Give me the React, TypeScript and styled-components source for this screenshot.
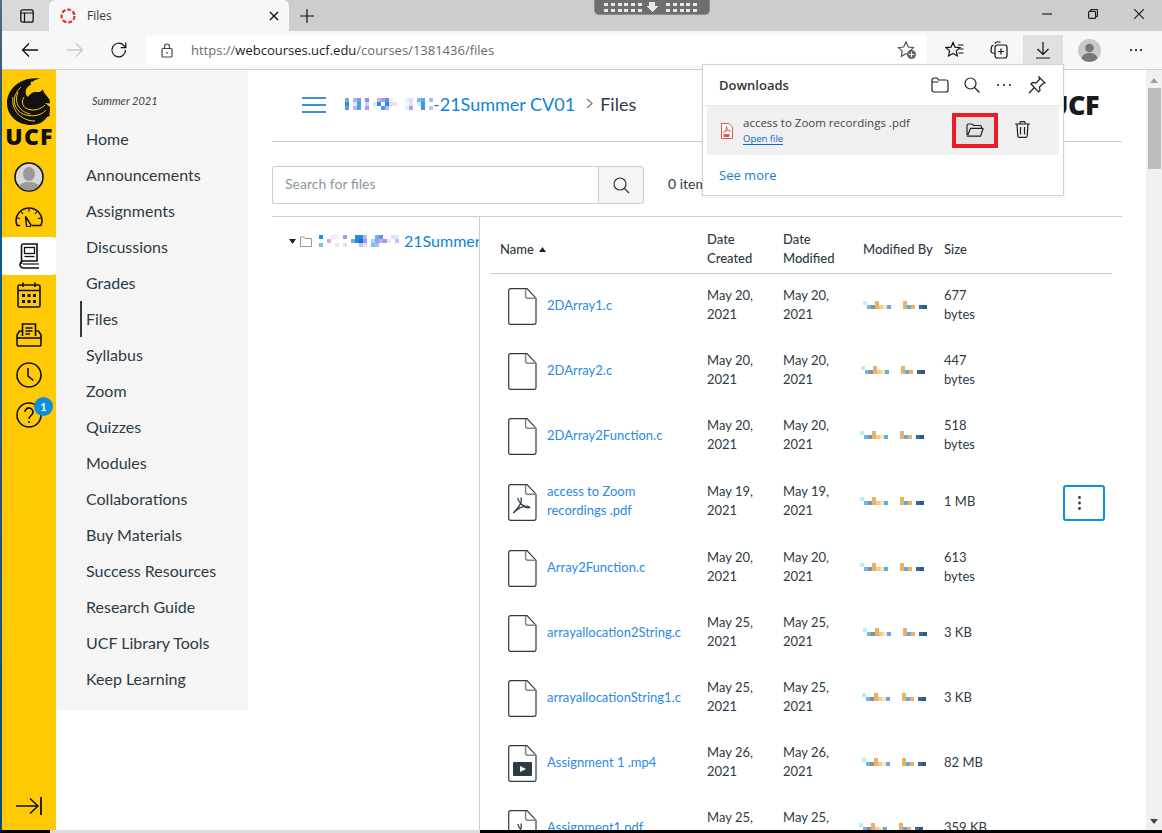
import React from "react";
import styled, { createGlobalStyle } from "styled-components";

const Global = createGlobalStyle`
  html, body { margin: 0; padding: 0; overflow: hidden; background: #fff; }
  * { box-sizing: border-box; }
  svg { display: block; flex: none; }
`;

const ui = `"Open Sans", "Noto Sans", "Liberation Sans", sans-serif`;
const lato = `Lato, "Open Sans", "Liberation Sans", sans-serif`;
const ink = "#2d3b45";
const blue = "#2b8ae2";

const Page = styled.div`
  position: relative;
  width: 1162px;
  height: 833px;
  overflow: hidden;
  display: flex;
  flex-direction: column;
  font-family: ${lato};
  color: ${ink};
`;
const Desk = styled.div`
  flex: 1;
  min-height: 0;
  display: flex;
`;
const DeskEdge = styled.div`
  width: 2px;
  background: linear-gradient(#5b6b78 0, #1c4f78 15%, #0a5a8c 35%, #2c4f7a 55%, #0a4a7c 100%);
`;
const BottomBand = styled.div`
  height: 3px;
  background: linear-gradient(90deg, #000 0 50px, #dcdcdc 50px 480px, #000 480px);
`;
const Win = styled.div`
  flex: 1;
  min-width: 0;
  display: flex;
  flex-direction: column;
`;
const TabStrip = styled.div`
  height: 31px;
  background: #cdcdcd;
  display: flex;
  align-items: stretch;
`;
const SideTabBtn = styled.div`
  width: 47px;
  background: #d9d9d9;
  display: flex;
  align-items: center;
  justify-content: center;
  padding-left: 2px;
  border-bottom-right-radius: 4px;
`;
const Tab = styled.div`
  width: 240px;
  background: #f7f7f7;
  border-radius: 6px 6px 0 0;
  display: flex;
  align-items: center;
  padding: 0 10px 0 11px;
  gap: 11px;
  font: 12px ${ui};
  color: #333;
`;
const TabTitle = styled.span`
  flex: 1;
`;
const NewTab = styled.div`
  width: 36px;
  display: flex;
  align-items: center;
  justify-content: center;
`;
const WinBtns = styled.div`
  margin-left: auto;
  display: flex;
  align-items: center;
  padding-bottom: 4px;
`;
const WinBtn = styled.div`
  width: 46px;
  display: flex;
  justify-content: center;
`;
const Toolbar = styled.div`
  height: 39px;
  background: #f7f7f7;
  border-bottom: 1px solid #cfcfcf;
  display: flex;
  align-items: flex-start;
  padding-top: 4px;
`;
const ToolBtn = styled.div<{ $w: number; $on?: boolean }>`
  width: ${(p) => p.$w}px;
  height: 30px;
  margin-left: ${(p) => (p.$on ? "2px" : "0")};
  display: flex;
  align-items: center;
  justify-content: center;
  background: ${(p) => (p.$on ? "#e0e0e0" : "transparent")};
`;
const AddressBar = styled.div`
  width: 781px;
  height: 30px;
  margin: 0 6px 0 1px;
  background: #fff;
  border-radius: 4px;
  display: flex;
  align-items: center;
  padding: 0 10px 0 15px;
  font: 13px ${ui};
  color: #6b6b6b;
`;
const Url = styled.span`
  flex: 1;
  margin-left: 18px;
`;
const UrlDomain = styled.span`
  color: #222;
`;
const Viewport = styled.div`
  flex: 1;
  min-height: 0;
  display: flex;
`;
const GlobalNav = styled.nav`
  width: 54px;
  background: #ffc904;
  display: flex;
  flex-direction: column;
  align-items: center;
  padding-top: 8px;
  padding-bottom: 15px;
`;
const LogoBox = styled.div`
  width: 54px;
  height: 79px;
  display: flex;
  flex-direction: column;
  align-items: center;
`;
const LogoText = styled.div`
  font: 800 23px/18px "Open Sans", "Liberation Sans", sans-serif;
  letter-spacing: 1.2px;
  color: #111;
  margin-top: 1px;
  padding-left: 1px;
`;
const GlobalItem = styled.div<{ $on?: boolean; $h: number }>`
  position: relative;
  width: 54px;
  height: ${(p) => p.$h}px;
  display: flex;
  align-items: center;
  justify-content: center;
  background: ${(p) => (p.$on ? "#fff" : "transparent")};
  border-radius: ${(p) => (p.$on ? "2px" : "0")};
`;
const Badge = styled.span`
  position: absolute;
  left: 32px;
  top: 2px;
  width: 19px;
  height: 19px;
  border-radius: 50%;
  background: #0e8fdc;
  color: #fff;
  font: 700 11px/19px ${lato};
  text-align: center;
`;
const NavSpacer = styled.div`
  flex: 1;
`;
const CourseNav = styled.nav`
  width: 192px;
  height: 640px;
  background: #f5f5f5;
  padding: 23px 0 0 24px;
`;
const Term = styled.div`
  font: italic 11px/16px ${lato};
  color: #444;
  margin: 0 0 12px 12px;
`;
const NavItem = styled.div<{ $on?: boolean }>`
  height: 36px;
  line-height: 36px;
  font-size: 16px;
  padding-left: 6px;
  color: ${ink};
  border-left: 2px solid ${(p) => (p.$on ? ink : "transparent")};
  text-indent: -2px;
`;
const Main = styled.main`
  flex: 1;
  min-width: 0;
  padding: 0 24px;
  overflow: hidden;
`;
const Header = styled.header`
  height: 72px;
  border-bottom: 1px solid #c7cdd1;
  display: flex;
  align-items: center;
  padding-left: 30px;
  padding-bottom: 4px;
  font-size: 18px;
`;
const Burger = styled.div`
  width: 24px;
  height: 16px;
  margin: 3px 19px 0 0;
  border-top: 2px solid #3d8ee0;
  border-bottom: 2px solid #3d8ee0;
  display: flex;
  align-items: center;
  &::before {
    content: "";
    display: block;
    width: 100%;
    height: 2px;
    background: #3d8ee0;
  }
`;
const CrumbLink = styled.span`
  color: #0a84e0;
`;
const CrumbSep = styled.span`
  margin: 0 7px 0 11px;
`;
const CrumbHere = styled.span`
  color: ${ink};
`;
const HeaderLogo = styled.div`
  margin-left: auto;
  margin-right: 23px;
  margin-top: 2px;
  font: 800 27px/26px "Open Sans", "Liberation Sans", sans-serif;
  color: #1a1a1a;
  letter-spacing: -0.5px;
`;
const SearchRow = styled.div`
  height: 75px;
  border-bottom: 1px solid #c7cdd1;
  padding-top: 24px;
  display: flex;
  align-items: flex-start;
`;
const SearchBox = styled.div`
  width: 326px;
  height: 38px;
  border: 1px solid #c7cdd1;
  border-right: none;
  border-radius: 3px 0 0 3px;
  font-size: 14px;
  line-height: 34px;
  padding-left: 12px;
  color: #8b969e;
`;
const SearchBtn = styled.div`
  width: 46px;
  height: 38px;
  background: #f5f5f5;
  border: 1px solid #c7cdd1;
  border-radius: 0 3px 3px 0;
  display: flex;
  align-items: center;
  justify-content: center;
`;
const Selected = styled.div`
  margin-left: 24px;
  font-size: 14px;
  line-height: 36px;
`;
const Split = styled.div`
  display: flex;
  align-items: flex-start;
`;
const Tree = styled.aside`
  width: 208px;
  height: 620px;
  border-right: 1px solid #c7cdd1;
  overflow: hidden;
  padding: 13px 0 0 17px;
  display: flex;
  align-items: flex-start;
  white-space: nowrap;
  font-size: 16px;
  line-height: 22px;
  color: #0a84e0;
`;
const TreeHead = styled.div`
  display: flex;
  align-items: center;
  gap: 4px;
`;
const TreeName = styled.span`
  margin-left: 1px;
`;
const Table = styled.div`
  width: 622px;
  margin-left: 10px;
`;
const Cols = `
  display: grid;
  grid-template-columns: 217px 76px 80px 81px 52px 1fr;
  font-size: 13px;
  line-height: 19px;
`;
const HeadRow = styled.div`
  ${Cols}
  height: 57px;
  border-bottom: 1px solid #c7cdd1;
  align-items: center;
  font-weight: 500;
  color: ${ink};
  padding-top: 9px;
`;
const HeadCell = styled.div<{ $lift?: number }>`
  margin-bottom: ${(p) => p.$lift ?? 0}px;
`;
const NameHead = styled.div`
  padding-left: 10px;
  display: flex;
  align-items: center;
  gap: 5px;
`;
const Row = styled.div<{ $tall?: boolean }>`
  ${Cols}
  height: ${(p) => (p.$tall ? 67 : 65)}px;
  align-items: center;
`;
const NameCell = styled.div`
  display: flex;
  align-items: center;
  padding-left: 18px;
  gap: 10px;
`;
const FileLink = styled.div<{ $lift: number }>`
  width: 135px;
  margin-bottom: ${(p) => p.$lift}px;
  overflow: hidden;
  color: ${blue};
`;
const DateCell = styled.div`
  width: 60px;
  margin-bottom: 4px;
`;
const SizeCell = styled.div<{ $lift: number }>`
  width: 45px;
  margin-bottom: ${(p) => p.$lift}px;
`;
const By = styled.div<{ $shift: number }>`
  margin-left: ${(p) => p.$shift}px;
  margin-bottom: 3px;
`;
const Actions = styled.div`
  display: flex;
  justify-content: flex-end;
  padding-right: 7px;
`;
const Kebab = styled.div`
  width: 42px;
  height: 36px;
  border: 2px solid #0e8fdc;
  border-radius: 3px;
  display: flex;
  align-items: center;
  justify-content: center;
  padding-right: 9px;
`;
const Scrollbar = styled.div`
  width: 16px;
  background: #f0f0f0;
  display: flex;
  flex-direction: column;
  align-items: center;
  padding: 8px 0 6px;
`;
const Thumb = styled.div`
  width: 13px;
  height: 81px;
  margin-top: 5px;
  background: #bdbdbd;
`;
const ScrollGap = styled.div`
  flex: 1;
`;
const ArrowUp = styled.div<{ $down?: boolean }>`
  width: 0;
  height: 0;
  border-left: 4px solid transparent;
  border-right: 4px solid transparent;
  border-${(p) => (p.$down ? "top" : "bottom")}: 5px solid ${(p) => (p.$down ? "#444" : "#a0a0a0")};
`;
const Popup = styled.div`
  position: absolute;
  left: 702px;
  top: 64px;
  width: 362px;
  height: 132px;
  background: #fff;
  border: 1px solid #d2d2d2;
  box-shadow: 0 1px 3px rgba(0, 0, 0, 0.08);
  font-family: ${ui};
`;
const PopHead = styled.div`
  height: 41px;
  border-bottom: 1px solid #e6e6e6;
  display: flex;
  align-items: center;
  padding: 0 17px 0 16px;
`;
const PopTitle = styled.div`
  flex: 1;
  font-size: 13px;
  font-weight: 600;
  color: #333;
`;
const PopTools = styled.div`
  display: flex;
  align-items: center;
  gap: 15px;
`;
const PopItem = styled.div`
  height: 49px;
  margin: 0 4px;
  background: #f0f0f0;
  display: flex;
  align-items: center;
  padding-left: 14px;
`;
const PopFile = styled.div`
  margin-left: 10px;
  width: 209px;
  font-size: 11.5px;
  line-height: 15px;
  color: #444;
  margin-bottom: 2px;
`;
const OpenFile = styled.span`
  display: inline-block;
  font-size: 9.5px;
  line-height: 11px;
  color: #0a6cc4;
  border-bottom: 1px solid #0a6cc4;
  margin-top: 2px;
`;
const RedBtn = styled.div`
  width: 46px;
  height: 35px;
  margin-bottom: 1px;
  border: 4px solid #ed1c24;
  background: #e3e3e3;
  display: flex;
  align-items: center;
  justify-content: center;
`;
const TrashBtn = styled.div`
  width: 48px;
  display: flex;
  justify-content: center;
  padding-bottom: 2px;
`;
const SeeMore = styled.div`
  font-size: 13px;
  line-height: 18px;
  color: #1a7fd0;
  padding: 11px 16px;
`;
const Notch = styled.div`
  position: absolute;
  left: 594px;
  top: 0;
  width: 116px;
  height: 15px;
  background: #6e6e6e;
  border: 1px solid #8c8c8c;
  border-top: none;
  border-radius: 0 0 5px 5px;
  display: flex;
  align-items: center;
  justify-content: center;
`;

const S = { fill: "none", stroke: "#1f1f1f", strokeWidth: 1.2 } as const;
const K = { fill: "none", stroke: "#111", strokeWidth: 1.6 } as const;

const Mosaic = ({ cells, w, h, size }: { cells: [number, number, string][]; w: number; h: number; size: number }) => (
  <svg width={w * size} height={h * size} shapeRendering="crispEdges">
    {cells.map(([x, y, c], i) => (
      <rect key={i} x={x * size} y={y * size} width={size} height={size} fill={c} />
    ))}
  </svg>
);

const crumbCells: [number, number, string][] = [
  [0, 0, "#7fa9ea"], [0, 1, "#1497ea"], [0, 2, "#6f90e0"],
  [2, 0, "#b5b5ee"], [3, 0, "#8a93e4"], [2, 1, "#d9e8fb"], [3, 1, "#35a9f0"], [2, 2, "#c5b0e8"], [3, 2, "#5a9ae8"],
  [5, 0, "#8c8ee4"], [5, 1, "#c7d6f6"], [5, 2, "#a799e6"],
  [7, 1, "#e6e6ee"], [8, 0, "#c9b0ea"], [8, 1, "#1497ea"], [9, 0, "#a79ae6"], [9, 2, "#4f8fe6"], [10, 0, "#6b8be4"], [10, 1, "#1a8ee8"], [10, 2, "#b5b5ee"], [11, 1, "#f1d9ee"], [12, 1, "#ecdff0"], [11, 0, "#f6e6f2"],
  [15, 0, "#d9f6fb"], [15, 1, "#eefcfd"], [15, 2, "#d0f6fa"], [16, 0, "#f6d4ec"], [16, 1, "#e8e2f4"], [16, 2, "#b79ee8"],
  [18, 0, "#6ec3f0"], [18, 1, "#d0eaf8"], [19, 0, "#5aa9ec"], [19, 1, "#2f9aea"], [19, 2, "#4a8fe6"], [21, 0, "#a8bcf0"], [21, 2, "#b9c6f2"],
];
const treeCells: [number, number, string][] = [
  [0, 0, "#1497ea"], [0, 2, "#6ec3f0"], [2, 1, "#c9b0ea"], [3, 0, "#f6e6f2"], [4, 0, "#fdeef2"], [4, 2, "#f9dde6"],
  [6, 0, "#a799e6"], [6, 2, "#eadff4"], [8, 1, "#7fa9ea"], [9, 0, "#1497ea"], [9, 1, "#3a7fe0"], [10, 0, "#1a8ee8"], [10, 1, "#1a6fd8"], [11, 0, "#c9b0ea"], [11, 1, "#a799e6"], [11, 2, "#f1d9ee"], [10, 2, "#b7c6f2"],
  [13, 1, "#a8d4f4"], [13, 2, "#6ec3f0"], [14, 0, "#7fa9ea"], [14, 1, "#7fa9ea"], [14, 2, "#c9b0ea"], [15, 0, "#6f90e0"], [15, 1, "#b5b5ee"], [16, 1, "#a799e6"], [17, 1, "#f1e2f4"], [18, 0, "#e8d6f4"], [19, 0, "#d0eefa"], [19, 1, "#b9c6f2"],
];
const byCells: [number, number, string][] = [
  [0, 0, "#b6f0ff"], [1, 1, "#6bb5e8"], [2, 1, "#8a8f94"], [3, 0, "#e8b06a"], [3, 1, "#e8b06a"], [4, 1, "#f4c98a"], [5, 1, "#fde3b8"], [6, 1, "#5aade8"],
  [10, 0, "#e8b06a"], [10, 1, "#e8b06a"], [11, 1, "#5aade8"], [12, 1, "#f0b060"],
  [14, 1, "#2a6ab0"], [15, 1, "#33567a"],
];

const FileIcon = ({ kind }: { kind: "doc" | "pdf" | "video" }) => (
  <svg width="29" height="37" viewBox="0 0 29 37">
    <path d="M2.5 .7H19L28 10.2V34.5a1.8 1.8 0 0 1-1.8 1.8H2.5A1.8 1.8 0 0 1 .7 34.5V2.5A1.8 1.8 0 0 1 2.5 .7Z" fill="#fff" stroke={ink} strokeWidth="1.2" />
    <path d="M17.6 1V8a2.2 2.2 0 0 0 2.2 2.2H28" fill="none" stroke="#7d868d" strokeWidth="1.5" />
    {kind === "pdf" && (
      <path d="M12.8 13.5c1.5 3-.5 8.5-7.5 15.5 6.5-7 15-8 16.5-5.5-3.5 1.5-11-4-12-9.5" fill="none" stroke={ink} strokeWidth="1.3" />
    )}
    {kind === "video" && (
      <>
        <rect x="5" y="17" width="19" height="14" rx="1" fill={ink} />
        <path d="M12 21l6 3-6 3Z" fill="#fff" />
      </>
    )}
  </svg>
);

const UcfMark = () => (
  <svg width="46" height="48" viewBox="6 8 46 48">
    <path d="M40 8.500C22 6 7 18 7 33c0 13 11 22 24 22 7 0 13-3 16-8l2.500-1 .5-9-5-4 5 .5-.5-4-5.500-7-1-3-3 2.500h-6c-3 1-5 3-6 5-4-3-3-10 4-13-.5-1.500 2-4.500 8-5.500Z" fill="#111" />
    <circle cx="32" cy="13" r="1.500" fill="#ffc904" />
    <g fill="none" stroke="#ffc904" strokeWidth="1">
      <path d="M21 17C11 26 12 41 26 45c8 2 16 0 20-5" />
      <path d="M13 27C11 40 21 51 35 51" />
      <path d="M24 27c-4 7 0 13 9 13 5 0 9-2 12-5" />
      <path d="M18 22c-4 9 0 19 12 22" />
    </g>
  </svg>
);

const rows = [
  { n: "2DArray1.c", k: "doc", c: "May 20, 2021", m: "May 20, 2021", s: "677 bytes", b: 0 },
  { n: "2DArray2.c", k: "doc", c: "May 20, 2021", m: "May 20, 2021", s: "447 bytes", b: -2 },
  { n: "2DArray2Function.c", k: "doc", c: "May 20, 2021", m: "May 20, 2021", s: "518 bytes", b: -3 },
  { n: "access to Zoom recordings .pdf", k: "pdf", c: "May 19, 2021", m: "May 19, 2021", s: "1 MB", b: -3, tall: true },
  { n: "Array2Function.c", k: "doc", c: "May 20, 2021", m: "May 20, 2021", s: "613 bytes", b: -3 },
  { n: "arrayallocation2String.c", k: "doc", c: "May 25, 2021", m: "May 25, 2021", s: "3 KB", b: 0 },
  { n: "arrayallocationString1.c", k: "doc", c: "May 25, 2021", m: "May 25, 2021", s: "3 KB", b: -1 },
  { n: "Assignment 1 .mp4", k: "video", c: "May 26, 2021", m: "May 26, 2021", s: "82 MB", b: -1 },
  { n: "Assignment1.pdf", k: "pdf", c: "May 25, 2021", m: "May 25, 2021", s: "359 KB", b: -4 },
] as const;

const courseLinks = ["Home", "Announcements", "Assignments", "Discussions", "Grades", "Files", "Syllabus", "Zoom", "Quizzes", "Modules", "Collaborations", "Buy Materials", "Success Resources", "Research Guide", "UCF Library Tools", "Keep Learning"];

export default function App() {
  return (
    <Page>
      <Global />
      <Desk>
        <DeskEdge />
        <Win>
          <TabStrip>
            <SideTabBtn>
              <svg width="14" height="14" viewBox="0 0 14 14"><rect x=".8" y=".8" width="12.4" height="12.4" rx="2" {...S} strokeWidth="1.300" stroke="#111" /><path d="M.8 4H13.200M4.500 4V13" {...S} stroke="#111" /></svg>
            </SideTabBtn>
            <Tab>
              <svg width="16" height="16" viewBox="0 0 16 16"><circle cx="8" cy="8" r="6.500" fill="none" stroke="#e0352b" strokeWidth="2.200" strokeDasharray="4 1.800" /></svg>
              <TabTitle>Files</TabTitle>
              <svg width="10" height="10" viewBox="0 0 10 10"><path d="M1 1l8 8M9 1l-8 8" {...S} stroke="#111" strokeWidth="1.400" /></svg>
            </Tab>
            <NewTab>
              <svg width="14" height="14" viewBox="0 0 14 14"><path d="M7 0V14M0 7H14" {...S} stroke="#111" /></svg>
            </NewTab>
            <WinBtns>
              <WinBtn><svg width="10" height="10" viewBox="0 0 10 10"><path d="M0 5H10" {...S} /></svg></WinBtn>
              <WinBtn><svg width="10" height="10" viewBox="0 0 10 10"><rect x=".6" y="2.400" width="7" height="7" rx="1" {...S} /><path d="M2.500 2.400V1.500a1 1 0 0 1 1-1H8.500a1 1 0 0 1 1 1V6.500a1 1 0 0 1-1 1H7.600" {...S} /></svg></WinBtn>
              <WinBtn><svg width="10" height="10" viewBox="0 0 10 10"><path d="M0 0L10 10M10 0L0 10" {...S} /></svg></WinBtn>
            </WinBtns>
          </TabStrip>
          <Toolbar>
            <ToolBtn $w={55}><svg width="18" height="16" viewBox="0 0 18 16"><path d="M17 8H1.500M8 1.500L1.500 8 8 14.500" {...S} stroke="#111" strokeWidth="1.300" /></svg></ToolBtn>
            <ToolBtn $w={35}><svg width="18" height="16" viewBox="0 0 18 16"><path d="M1 8H16.500M10 1.500L16.500 8 10 14.500" {...S} stroke="#c8c8c8" strokeWidth="1.300" /></svg></ToolBtn>
            <ToolBtn $w={53}><svg width="18" height="18" viewBox="0 0 18 18"><path d="M15.500 9a6.800 6.800 0 1 1-2-4.800L15.500 6.500M15.800 1.500V6.600H10.700" {...S} stroke="#111" /></svg></ToolBtn>
            <AddressBar>
              <svg width="12" height="15" viewBox="0 0 12 15"><rect x="1" y="5.500" width="10" height="8.500" rx="1" {...S} stroke="#444" /><path d="M3.500 5.500V3.500a2.500 2.500 0 0 1 5 0V5.500" {...S} stroke="#444" /><circle cx="6" cy="9.800" r=".9" fill="#444" /></svg>
              <Url>https://<UrlDomain>webcourses.ucf.edu</UrlDomain>/courses/1381436/files</Url>
              <svg width="20" height="20" viewBox="0 0 20 20"><path d="M9 2l2.300 5 5.200.6-3.800 3.500 1 5.200L9 13.700l-4.700 2.600 1-5.200L1.500 7.600 6.700 7Z" {...S} stroke="#555" /><circle cx="14.500" cy="14.500" r="4.500" fill="#666" /><path d="M14.500 12v5M12 14.500h5" stroke="#fff" strokeWidth="1" /></svg>
            </AddressBar>
            <ToolBtn $w={44}><svg width="20" height="18" viewBox="0 0 20 18"><path d="M8 1.500l2 4.600 5 .5-3.700 3.300 1 5L8 12.400l-4.400 2.500 1-5L1 6.600 6 6.100Z" {...S} stroke="#111" /><path d="M13 4h5.500M14.500 8h4M13.500 12h5" {...S} stroke="#111" /></svg></ToolBtn>
            <ToolBtn $w={44}><svg width="18" height="18" viewBox="0 0 18 18"><path d="M5 2.500A2 2 0 0 1 7 1h3.500M5 12.500L2.500 12A2 2 0 0 1 1 10L1.500 6a2 2 0 0 1 2-1.700" {...S} stroke="#111" /><rect x="5" y="4" width="12" height="13" rx="2.500" {...S} stroke="#111" /><path d="M11 7.500v6M8 10.500h6" {...S} stroke="#111" /></svg></ToolBtn>
            <ToolBtn $w={40} $on><svg width="14" height="18" viewBox="0 0 14 18"><path d="M7 1V13M1.500 8L7 13.500 12.500 8M0 17H14" {...S} stroke="#111" /></svg></ToolBtn>
            <ToolBtn $w={52}><svg width="23" height="23" viewBox="0 0 23 23"><circle cx="11.500" cy="11.500" r="11.500" fill="#c9c9c9" /><circle cx="11.500" cy="9" r="4.300" fill="#777" /><path d="M3.500 19.500c1-4 4-5.500 8-5.500s7 1.500 8 5.500a11.500 11.500 0 0 1-16 0Z" fill="#777" /></svg></ToolBtn>
            <ToolBtn $w={41}><svg width="14" height="4" viewBox="0 0 14 4"><circle cx="2" cy="2" r="1.100" fill="#111" /><circle cx="7" cy="2" r="1.100" fill="#111" /><circle cx="12" cy="2" r="1.100" fill="#111" /></svg></ToolBtn>
          </Toolbar>
          <Viewport>
            <GlobalNav>
              <LogoBox>
                <UcfMark />
                <LogoText>UCF</LogoText>
              </LogoBox>
              <GlobalItem $h={40}>
                <svg width="30" height="30" viewBox="0 0 30 30"><defs><clipPath id="av"><circle cx="15" cy="15" r="13.500" /></clipPath></defs><circle cx="15" cy="15" r="14" fill="#d7d7d7" stroke="#111" strokeWidth="1.600" /><g clipPath="url(#av)"><ellipse cx="15" cy="12" rx="6" ry="7" fill="#9a9a9a" /><path d="M3 29c1-7 6-9 12-9s11 2 12 9Z" fill="#9a9a9a" /></g></svg>
              </GlobalItem>
              <GlobalItem $h={40}>
                <svg width="28" height="20" viewBox="0 0 28 20"><path d="M5 18.500H2.200A12 12 0 0 1 1 14 13 13 0 0 1 27 14a12 12 0 0 1-1.200 4.500H17" {...K} /><path d="M10.500 9.500L16 18a2.500 2.500 0 0 1-4.500 1Z" {...K} strokeWidth="1.400" /><path d="M14 1.500v3M6 4.500l2 2.500M22 4.500l-2 2.500M2 11l3 .5M26 11l-3 .5" {...K} strokeWidth="1.200" /></svg>
              </GlobalItem>
              <GlobalItem $h={38} $on>
                <svg width="22" height="26" viewBox="0 0 22 26"><path d="M3.500 21V3a2 2 0 0 1 2-2H19V18H5.500a3.500 3.500 0 0 0 0 7H21" {...K} /><path d="M5 21H21" {...K} strokeWidth="1.200" /><rect x="6.500" y="4.500" width="10" height="6" {...K} strokeWidth="1.300" /><path d="M6.500 13.500H16.500" {...K} strokeWidth="1.300" /></svg>
              </GlobalItem>
              <GlobalItem $h={40}>
                <svg width="24" height="26" viewBox="0 0 24 26"><rect x="1" y="3" width="22" height="22" rx="1.500" {...K} /><path d="M1 8.500H23M6 .5V5M18 .5V5" {...K} /><g fill="#111"><path d="M5 12h3v3H5zM10.500 12h3v3h-3zM16 12h3v3h-3zM5 18h3v3H5zM10.500 18h3v3h-3zM16 18h3v3h-3z" /></g></svg>
              </GlobalItem>
              <GlobalItem $h={40}>
                <svg width="26" height="24" viewBox="0 0 26 24"><path d="M6.500 13V1H19.500V13" {...K} /><path d="M9.500 5H16.500M9.500 8H16.500M9.500 11H14" {...K} strokeWidth="1.300" /><path d="M6.500 8H3.500L1 12V21.500a1.500 1.500 0 0 0 1.500 1.500h21a1.500 1.500 0 0 0 1.500-1.500V12L22.500 8H19.500" {...K} /><path d="M1 15H25" {...K} /></svg>
              </GlobalItem>
              <GlobalItem $h={40}>
                <svg width="26" height="26" viewBox="0 0 26 26"><circle cx="13" cy="13" r="12" {...K} /><path d="M12 6V14L17.500 18.500" {...K} /></svg>
              </GlobalItem>
              <GlobalItem $h={40}>
                <svg width="26" height="26" viewBox="0 0 26 26"><circle cx="13" cy="13" r="12" {...K} /><path d="M9 10a4 4 0 1 1 6.200 3.300C13.800 14.200 13 15 13 17" {...K} /><circle cx="13" cy="20" r="1.100" fill="#111" /></svg>
                <Badge>1</Badge>
              </GlobalItem>
              <NavSpacer />
              <svg width="26" height="18" viewBox="0 0 26 18"><path d="M0 9H22M14 1.500L22 9 14 16.500" {...K} strokeWidth="1.500" /><path d="M25 0V18" {...K} strokeWidth="1.800" /></svg>
            </GlobalNav>
            <CourseNav>
              <Term>Summer 2021</Term>
              {courseLinks.map((l) => (
                <NavItem key={l} $on={l === "Files"}>{l}</NavItem>
              ))}
            </CourseNav>
            <Main>
              <Header>
                <Burger />
                <Mosaic cells={crumbCells} w={22} h={3} size={4} />
                <CrumbLink>-21Summer CV01</CrumbLink>
                <CrumbSep>
                  <svg width="7" height="11" viewBox="0 0 7 11"><path d="M1 1l5 4.500-5 4.500" {...S} stroke="#777" /></svg>
                </CrumbSep>
                <CrumbHere>Files</CrumbHere>
                <HeaderLogo>UCF</HeaderLogo>
              </Header>
              <SearchRow>
                <SearchBox>Search for files</SearchBox>
                <SearchBtn>
                  <svg width="17" height="17" viewBox="0 0 17 17"><circle cx="7" cy="7" r="6" {...S} stroke="#2d3b45" /><path d="M11.500 11.500L16 16" {...S} stroke="#2d3b45" /></svg>
                </SearchBtn>
                <Selected>0 items selected</Selected>
              </SearchRow>
              <Split>
                <Tree>
                  <TreeHead>
                    <svg width="7" height="5" viewBox="0 0 7 5"><path d="M0 0H7L3.500 5Z" fill="#222" /></svg>
                    <svg width="15" height="11" viewBox="0 0 15 11"><path d="M.5 10.500V1H4L5 2.500H11.500V10.500Z" fill="none" stroke="#999" /></svg>
                    <Mosaic cells={treeCells} w={20} h={3} size={4} />
                    <TreeName>21Summer CV01</TreeName>
                  </TreeHead>
                </Tree>
                <Table>
                  <HeadRow>
                    <NameHead>Name
                      <svg width="7" height="5" viewBox="0 0 7 5"><path d="M0 5H7L3.500 0Z" fill="#222" /></svg>
                    </NameHead>
                    <HeadCell $lift={2}>Date Created</HeadCell>
                    <HeadCell $lift={2}>Date Modified</HeadCell>
                    <HeadCell>Modified By</HeadCell>
                    <HeadCell>Size</HeadCell>
                    <HeadCell />
                  </HeadRow>
                  {rows.map((r) => (
                    <Row key={r.n} $tall={"tall" in r}>
                      <NameCell>
                        <FileIcon kind={r.k} />
                        <FileLink $lift={"tall" in r ? 4 : 2}>{r.n}</FileLink>
                      </NameCell>
                      <DateCell>{r.c}</DateCell>
                      <DateCell>{r.m}</DateCell>
                      <By $shift={r.b}><Mosaic cells={byCells} w={16} h={2} size={4} /></By>
                      <SizeCell $lift={r.s.includes("bytes") ? 4 : 2}>{r.s}</SizeCell>
                      <Actions>
                        {"tall" in r && (
                          <Kebab>
                            <svg width="3" height="14" viewBox="0 0 3 14"><circle cx="1.500" cy="1.500" r="1.400" fill={ink} /><circle cx="1.500" cy="7" r="1.400" fill={ink} /><circle cx="1.500" cy="12.500" r="1.400" fill={ink} /></svg>
                          </Kebab>
                        )}
                      </Actions>
                    </Row>
                  ))}
                </Table>
              </Split>
            </Main>
            <Scrollbar>
              <ArrowUp />
              <Thumb />
              <ScrollGap />
              <ArrowUp $down />
            </Scrollbar>
          </Viewport>
        </Win>
      </Desk>
      <BottomBand />

      <Notch>
        <svg width="96" height="11" viewBox="0 0 96 11" shapeRendering="crispEdges">
          <g fill="#e8e8e8">
            {[0, 1].map((y) => [0, 6.800, 13.600, 20.400, 27.200, 34, 62, 68.800, 75.600, 82.400, 89.200].map((x) => <rect key={`${x}-${y}`} x={x} y={1 + y * 6} width="4" height="3" />))}
            <path d="M45 0h6v4h3l-6 6-6-6h3Z" />
          </g>
        </svg>
      </Notch>

      <Popup>
        <PopHead>
          <PopTitle>Downloads</PopTitle>
          <PopTools>
            <svg width="18" height="16" viewBox="0 0 18 16"><path d="M1 3a2 2 0 0 1 2-2h3l1.500 2H15a2 2 0 0 1 2 2V13a2 2 0 0 1-2 2H3a2 2 0 0 1-2-2ZM1 5H7.500" {...S} /></svg>
            <svg width="16" height="16" viewBox="0 0 16 16"><circle cx="6.500" cy="6.500" r="5.500" {...S} /><path d="M10.500 10.500L15.500 15.500" {...S} /></svg>
            <svg width="18" height="4" viewBox="0 0 18 4"><circle cx="3" cy="2" r="1" fill="#222" /><circle cx="9" cy="2" r="1" fill="#222" /><circle cx="15" cy="2" r="1" fill="#222" /></svg>
            <svg width="18" height="18" viewBox="0 0 18 18"><path d="M11 1l6 6-2 .5-3.500 3.500.5 3.500-1.500 1.500L3 8l1.500-1.500L8 7l3.500-3.500ZM6 12l-5 5" {...S} /></svg>
          </PopTools>
        </PopHead>
        <PopItem>
          <svg width="12" height="16" viewBox="0 0 12 16"><path d="M1 .5H8L11.500 4V15.500H.5V.5Z" fill="#fff" stroke="#e2574c" /><path d="M5.500 3c.5 2-.5 4-3 6.500 3-2 6-3 7-1.500-2 .5-4-2-4-5Z" fill="none" stroke="#e2574c" /><rect x="2.500" y="11" width="6" height="3" fill="#e2574c" /></svg>
          <PopFile>
            access to Zoom recordings .pdf
            <br />
            <OpenFile>Open file</OpenFile>
          </PopFile>
          <RedBtn>
            <svg width="18" height="14" viewBox="0 0 18 14"><path d="M1 12V2.500A1.500 1.500 0 0 1 2.500 1H6L7.500 2.500H14A1.500 1.500 0 0 1 15.500 4V5.500M1 12.500a.8.8 0 0 0 .8.700H14.500L17 6a.6.6 0 0 0-.6-.7H4.500L1.800 12" {...S} /></svg>
          </RedBtn>
          <TrashBtn>
            <svg width="15" height="17" viewBox="0 0 15 17"><path d="M0 3H15M5 3V1.500A1 1 0 0 1 6 .6H9a1 1 0 0 1 1 .9V3M2 3l.8 12a1.500 1.500 0 0 0 1.500 1.400H10.700A1.500 1.500 0 0 0 12.200 15L13 3M5.500 6V13.500M9.500 6V13.500" {...S} /></svg>
          </TrashBtn>
        </PopItem>
        <SeeMore>See more</SeeMore>
      </Popup>
    </Page>
  );
}
